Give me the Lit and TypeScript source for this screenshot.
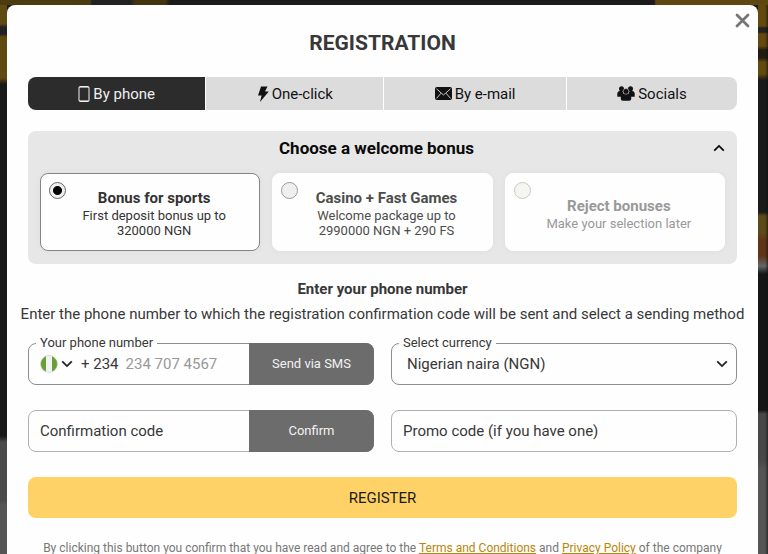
import { LitElement, html, css } from "lit";
import { customElement, state } from "lit/decorators.js";
import { classMap } from "lit/directives/class-map.js";

const icons = {
  phone: html`<svg width="12" height="16" viewBox="0 0 12 16" aria-hidden="true">
    <rect x="1" y="0.5" width="10" height="15" rx="1" fill="none" stroke="currentColor"></rect>
    <path d="M1 1.5h10M1 14.5h10" stroke="currentColor" fill="none" opacity="0.6"></path></svg>`,
  bolt: html`<svg width="12" height="16" viewBox="0 0 12 16" aria-hidden="true">
    <path d="M4 0.5H10.5L8 5.4H11.8L3 16L4.6 9.4H1Z" fill="currentColor"></path></svg>`,
  mail: html`<svg width="17" height="13" viewBox="0 0 17 13" aria-hidden="true">
    <rect width="17" height="13" rx="2" fill="currentColor"></rect>
    <path d="M1.5 1.8L8.5 8L15.5 1.8M1.5 11.4L6 6.2M15.5 11.4L11 6.2" fill="none" stroke="#dcdcdc" stroke-width="0.9"></path></svg>`,
  people: html`<svg width="18" height="15" viewBox="0 0 18 15" aria-hidden="true">
    <g fill="currentColor">
      <circle cx="4.5" cy="2.8" r="2.5"></circle><circle cx="13.5" cy="2.8" r="2.5"></circle>
      <path d="M0.3 10.8V8.2Q0.3 5 3 5H5.5L6.5 7.5L4.2 10.8Z"></path>
      <path d="M17.7 10.8V8.2Q17.7 5 15 5H12.5L11.5 7.5L13.8 10.8Z"></path>
      <path d="M3.8 13V11Q3.8 7.8 7 7.8H11Q14.2 7.8 14.2 11V13Q14.2 14.8 12.2 14.8H5.8Q3.8 14.8 3.8 13Z"></path>
      <circle cx="9" cy="5.4" r="2.9" stroke="#dcdcdc" stroke-width="0.5"></circle>
    </g></svg>`,
  up: html`<svg width="12" height="8" viewBox="0 0 12 8" aria-hidden="true">
    <path d="M1.2 6.7L6 1.9L10.8 6.7" fill="none" stroke="currentColor" stroke-width="1.8"></path></svg>`,
  down: html`<svg width="12" height="8" viewBox="0 0 12 8" aria-hidden="true">
    <path d="M1.2 1.3L6 6.1L10.8 1.3" fill="none" stroke="currentColor" stroke-width="1.8"></path></svg>`,
  close: html`<svg width="15" height="15" viewBox="0 0 15 15" aria-hidden="true">
    <path d="M2 2L13 13M13 2L2 13" fill="none" stroke="currentColor" stroke-width="2.8" stroke-linecap="round"></path></svg>`,
  flag: html`<svg width="18" height="18" viewBox="0 0 18 18" aria-hidden="true">
    <defs><clipPath id="round"><circle cx="9" cy="9" r="8.5"></circle></clipPath></defs>
    <g clip-path="url(#round)"><rect width="18" height="18" fill="#689f38"></rect>
    <rect x="6" width="6" height="18" fill="#f2f2f2"></rect></g>
    <circle cx="9" cy="9" r="8.5" fill="none" stroke="#d8ddd2" stroke-width="0.6"></circle></svg>`,
};

const tabs = [
  { id: "phone", label: "By phone", icon: icons.phone },
  { id: "click", label: "One-click", icon: icons.bolt },
  { id: "mail", label: "By e-mail", icon: icons.mail },
  { id: "social", label: "Socials", icon: icons.people },
];

const bonuses = [
  { id: "sports", title: "Bonus for sports", text: "First deposit bonus up to 320000 NGN" },
  { id: "casino", title: "Casino + Fast Games", text: "Welcome package up to 2990000 NGN + 290 FS" },
  { id: "reject", title: "Reject bonuses", text: "Make your selection later" },
];

@customElement("app-root")
export class AppRoot extends LitElement {
  @state() private tab = "phone";
  @state() private bonus = "sports";
  @state() private open = true;

  static styles = css`
    :host {
      display: block;
      box-sizing: border-box;
      height: 100vh;
      padding: 5px 10px 0 7px;
      overflow: hidden;
      font-family: Roboto, "Liberation Sans", sans-serif;
      font-size: 15px;
      color: #383838;
      background:
        linear-gradient(90deg, #4c3a10 0 90px, #222 92px 130px, #43340f 135px 165px, #1b1b1b 170px 654px, #5f4711 656px) top / 100% 5px no-repeat,
        linear-gradient(#5f4a10 0 24px, #222 27px 34px, #5f4a10 37px 78px, #191919 84px 436px, #4a4a4a 442px 500px, #555 505px) left / 7px 100% no-repeat,
        linear-gradient(90deg, transparent 7px, #1119 10px) right / 10px 100% no-repeat,
        linear-gradient(#64490f 0 26px, #222 28px 32px, #64490f 34px 46px, #221c10 50px 58px, #64490f 62px 74px, #1a1a1a 80px 212px, #5c4b18 216px 232px, #5f3517 240px 256px, #666 266px, #161616 274px 410px, #484848 414px 460px, #555 470px) right / 10px 100% no-repeat,
        #1b1b1b;
    }
    * { box-sizing: border-box; }
    button, input, select { font: inherit; color: inherit; margin: 0; border: 0; background: none; }
    button { padding: 0; cursor: pointer; }
    h1, h2, p { margin: 0; }
    svg { display: block; flex: none; }

    .modal {
      position: relative;
      height: 100%;
      padding: 25px 21px 24px;
      overflow: hidden auto;
      scrollbar-width: none;
      background: #fefefe;
      border-radius: 8px 8px 0 0;
    }
    .close { position: absolute; top: 8px; right: 8px; color: #757575; }
    .title { font-size: 21px; line-height: 26px; font-weight: 700; text-align: center; }

    .tabs { display: flex; gap: 1px; margin-top: 21px; border-radius: 8px; overflow: hidden; }
    .tab {
      display: flex; flex: 1 1 auto; align-items: center; justify-content: center; gap: 3px;
      height: 33px; background: #dcdcdc; color: #111;
    }
    .tab.on { background: #2c2c2c; color: #f0f0f0; }

    .bonus { margin-top: 21px; padding: 0 12px 13px; background: #e7e7e7; border-radius: 8px; }
    .bonus-head { display: flex; align-items: center; width: 100%; height: 42px; padding-bottom: 8px; color: #0a0a0a; }
    .bonus-name { flex: 1; font-size: 17px; font-weight: 700; }
    .cards { display: grid; grid-template-columns: repeat(3, 1fr); gap: 12px; }
    .card {
      display: flex; align-items: center; min-height: 78px; padding: 0 17px 0 8px;
      border: 1px solid #fefefe; border-radius: 8px; background: #fefefe;
      box-shadow: 0 0 8px #0000000a; text-align: center; color: #4d4d4d; cursor: pointer;
    }
    .card.on { border-color: #858585; color: #333; }
    .card.reject { color: #999; }
    .radio {
      appearance: none; flex: none; align-self: flex-start; width: 17px; height: 17px; margin-top: 8px;
      border: 1px solid #9a9a9a; border-radius: 50%; background: #efefef;
    }
    .radio:checked { border-color: #666; background: radial-gradient(circle, #000 4px, #efefef 5px); }
    .reject .radio { border-color: #c8c8c8; background: #f6f6f0; }
    .card-text { flex: 1; font-size: 13px; line-height: 15px; padding-top: 2px; }
    .card-title { display: block; font-size: 15px; line-height: 20px; font-weight: 700; }

    .lead { margin: 16px -12px 0; text-align: center; }
    .lead-title { font-size: 15px; line-height: 18px; font-weight: 700; }
    .lead-text { margin-top: 7px; line-height: 18px; }

    .form { display: grid; grid-template-columns: 1fr 1fr; gap: 25px 17px; margin-top: 20px; }
    .field {
      position: relative; display: flex; align-items: center; min-width: 0; height: 42px;
      border: 1px solid #b0b0b0; border-radius: 8px;
    }
    .field.strong { border-color: #8e8e8e; }
    .label {
      position: absolute; top: -9px; left: 7px; padding: 0 4px;
      font-size: 13px; line-height: 16px; background: #fefefe;
    }
    .input { flex: 1; min-width: 0; height: 40px; padding: 0 0 0 11px; outline: none; }
    .input::placeholder { color: #383838; opacity: 1; }
    .tel { padding-left: 7px; }
    .tel::placeholder { color: #999; }
    .country { display: flex; align-items: center; gap: 3px; margin-left: 11px; color: #222; }
    .code { margin-left: 8px; }
    .action {
      flex: none; width: 125px; height: 42px; margin: -1px; border-radius: 0 8px 8px 0;
      background: #6c6c6c; color: #f2f2f2; font-size: 13px; padding-bottom: 2px;
    }
    .select { flex: 1; height: 40px; padding: 0 32px 0 15px; appearance: none; outline: none; }
    .arrow { position: absolute; right: 8px; color: #222; pointer-events: none; }
    .register { width: 100%; height: 41px; margin-top: 25px; border-radius: 8px; background: #ffd267; color: #1c1a14; }
    .terms { margin-top: 22px; font-size: 12px; line-height: 16px; text-align: center; color: #777; }
    .link { color: #b8860b; }
  `;

  render() {
    return html`
      <main class="modal" role="dialog" aria-labelledby="title">
        <button class="close" aria-label="Close">${icons.close}</button>
        <h1 class="title" id="title">REGISTRATION</h1>
        <nav class="tabs">
          ${tabs.map((t) => html`
            <button class=${classMap({ tab: true, on: t.id === this.tab })} @click=${() => (this.tab = t.id)}>
              ${t.icon}<span>${t.label}</span>
            </button>`)}
        </nav>
        <section class="bonus">
          <button class="bonus-head" aria-expanded=${this.open} @click=${() => (this.open = !this.open)}>
            <span class="bonus-name">Choose a welcome bonus</span>${this.open ? icons.up : icons.down}
          </button>
          ${this.open ? html`<div class="cards">
            ${bonuses.map((b) => html`
              <label class=${classMap({ card: true, on: b.id === this.bonus, reject: b.id === "reject" })}>
                <input class="radio" type="radio" name="bonus" .checked=${b.id === this.bonus}
                  @change=${() => (this.bonus = b.id)} />
                <span class="card-text"><b class="card-title">${b.title}</b>${b.text}</span>
              </label>`)}
          </div>` : ""}
        </section>
        <section class="lead">
          <h2 class="lead-title">Enter your phone number</h2>
          <p class="lead-text">Enter the phone number to which the registration confirmation code will be sent and select a sending method</p>
        </section>
        <div class="form">
          <div class="field strong">
            <label class="label" for="tel">Your phone number</label>
            <button class="country" aria-label="Country: Nigeria">${icons.flag}${icons.down}</button>
            <span class="code">+ 234</span>
            <input class="input tel" id="tel" type="tel" placeholder="234 707 4567" />
            <button class="action">Send via SMS</button>
          </div>
          <div class="field strong">
            <label class="label" for="currency">Select currency</label>
            <select class="select" id="currency"><option>Nigerian naira (NGN)</option></select>
            <span class="arrow">${icons.down}</span>
          </div>
          <div class="field">
            <input class="input" aria-label="Confirmation code" placeholder="Confirmation code" />
            <button class="action">Confirm</button>
          </div>
          <div class="field">
            <input class="input" aria-label="Promo code" placeholder="Promo code (if you have one)" />
          </div>
        </div>
        <button class="register">REGISTER</button>
        <p class="terms">By clicking this button you confirm that you have read and agree to the
          <a class="link" href="#terms">Terms and Conditions</a> and
          <a class="link" href="#privacy">Privacy Policy</a> of the company</p>
      </main>`;
  }
}
